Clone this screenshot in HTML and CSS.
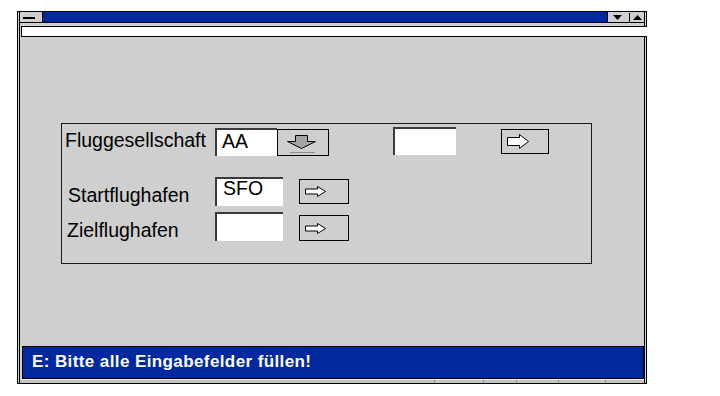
FILE: index.html
```html
<!DOCTYPE html>
<html lang="de">
<head>
    <meta charset="UTF-8">
    <meta name="viewport" content="width=device-width, initial-scale=1.0">
    <title>Flugauswahl</title>
    <link rel="stylesheet" href="styles.css">
</head>
<body>
    <div class="window">
        <div class="frame">
            <div class="titlebar">
                <div class="sysmenu"><span class="dash"></span></div>
                <div class="caption"></div>
                <svg class="winbtns" width="36" height="10" viewBox="0 0 36 10">
                    <polygon points="5,3 14,3 9.5,8" fill="#000"/>
                    <line x1="21.5" y1="1" x2="21.5" y2="10" stroke="#000"/>
                    <polygon points="25,8 34,8 29.5,3" fill="#000"/>
                </svg>
            </div>
            <div class="menubar"></div>

            <div class="client">
                <div class="group">
                    <div class="row row-airline">
                        <span class="label">Fluggesellschaft</span>
                        <div class="field field-airline">AA</div>
                        <div class="btn btn-down">
                            <svg width="30" height="19" viewBox="0 0 30 19">
                                <polygon points="8.5,0.5 20.5,0.5 20.5,6.5 28.5,6.5 14.5,13.5 0.5,6.5 8.5,6.5" fill="#a4a4a4" stroke="#000"/>
                                <line x1="3" y1="17.5" x2="28" y2="17.5" stroke="#8c8c8c"/>
                            </svg>
                        </div>
                        <div class="field field-number"></div>
                        <div class="btn btn-go">
                            <svg width="22" height="16" viewBox="0 0 22 16">
                                <polygon points="0.5,3.5 12.5,3.5 12.5,0.5 21.5,7.5 12.5,14.5 12.5,11.5 0.5,11.5" fill="#fff" stroke="#000"/>
                            </svg>
                        </div>
                    </div>

                    <div class="row row-start">
                        <span class="label">Startflughafen</span>
                        <div class="field field-airport">SFO</div>
                        <div class="btn btn-pick">
                            <svg width="22" height="11" viewBox="0 0 22 11">
                                <polygon points="0.5,3 12.5,3 12.5,0.5 20.5,5.5 12.5,10.5 12.5,8 0.5,8" fill="#fff" stroke="#000"/>
                            </svg>
                        </div>
                    </div>

                    <div class="row row-dest">
                        <span class="label">Zielflughafen</span>
                        <div class="field field-airport"></div>
                        <div class="btn btn-pick">
                            <svg width="22" height="11" viewBox="0 0 22 11">
                                <polygon points="0.5,3 12.5,3 12.5,0.5 20.5,5.5 12.5,10.5 12.5,8 0.5,8" fill="#fff" stroke="#000"/>
                            </svg>
                        </div>
                    </div>
                </div>
            </div>

            <div class="status">E: Bitte alle Eingabefelder füllen!</div>
            <div class="strip">
                <span class="seg seg-main"></span>
                <span class="seg" style="width: 49px"></span>
                <span class="seg" style="width: 33px"></span>
                <span class="seg" style="width: 42px"></span>
                <span class="seg" style="width: 47px"></span>
                <span class="seg" style="width: 39px"></span>
            </div>
        </div>
    </div>
</body>
</html>
```

FILE: styles.css
```css
body {
    margin: 0;
    background: #fff;
    font-family: "Liberation Sans", Arial, sans-serif;
}
.window {
    margin: 11px 0 0 17px;
    width: 630px;
    border: 1px solid #000;
    background: #cfcfcf;
    box-sizing: border-box;
}
.frame {
    margin: 0 1px;
    border-left: 1px solid #000;
    border-right: 1px solid #000;
}

/* title bar */
.titlebar {
    display: flex;
    height: 11px;
    border-bottom: 1px solid #000;
    box-sizing: border-box;
}
.sysmenu {
    width: 22px;
    padding: 5px 0 0 3px;
    box-sizing: border-box;
}
.dash {
    display: block;
    width: 12px;
    height: 2px;
    background: #000;
}
.caption {
    flex: 1;
    background: #0029a0;
    border-left: 1px solid #000;
    border-right: 1px solid #000;
}
.winbtns {
    display: block;
    flex: none;
}
.menubar {
    margin: 3px -3px 0 1px;
    height: 11px;
    background: #fff;
    border: 1px solid #000;
    border-right: none;
    box-sizing: border-box;
}

/* client area */
.client {
    height: 309px;
    overflow: hidden;
}
.group {
    margin: 86px 0 0 41px;
    width: 531px;
    height: 141px;
    border: 1px solid #1a1a1a;
    box-sizing: border-box;
}
.row {
    display: flex;
    align-items: flex-start;
}
.row-airline { margin-top: 3px; }
.row-start { margin-top: 21px; }
.row-dest { margin-top: 6px; }

.label {
    width: 153px;
    font-size: 19.5px;
    line-height: 22px;
    color: #000;
    box-sizing: border-box;
    white-space: nowrap;
}
.row-airline .label { margin-top: 2px; padding-left: 3px; }
.row-start .label { margin-top: 7px; padding-left: 6px; }
.row-dest .label { margin-top: 7px; padding-left: 5px; }

.field {
    background: #fff;
    border-top: 2px solid #3a3a3a;
    border-left: 2px solid #3a3a3a;
    box-sizing: border-box;
    font-size: 19.5px;
    padding-left: 5px;
    color: #000;
}
.field-airline {
    width: 62px;
    height: 28px;
    margin-top: 1px;
    line-height: 22px;
}
.field-number {
    width: 63px;
    height: 28px;
    margin-left: 64px;
}
.field-airport {
    width: 68px;
    height: 29px;
    line-height: 19px;
    padding-left: 6px;
}

.btn {
    display: flex;
    align-items: center;
    border: 1px solid #000;
    box-sizing: border-box;
    padding-left: 5px;
}
.btn svg { display: block; }
.btn-down {
    width: 52px;
    height: 27px;
    margin-top: 2px;
    padding: 3px 0 0 9px;
}
.btn-go {
    width: 48px;
    height: 25px;
    margin: 2px 0 0 45px;
}
.btn-pick {
    width: 50px;
    height: 25px;
    margin: 2px 0 0 16px;
}
.row-dest .btn-pick {
    height: 26px;
    margin-top: 3px;
}

/* status line */
.status {
    margin-left: 2px;
    height: 33px;
    border: 1px solid #000;
    box-sizing: border-box;
    background: #0029a0;
    color: #fff;
    font-size: 17px;
    font-weight: bold;
    letter-spacing: 0.4px;
    line-height: 20px;
    padding: 5px 0 0 9px;
}
.strip {
    display: flex;
    height: 4px;
    background: #c4c4c4;
    border-top: 1px solid #ececec;
    box-sizing: border-box;
}
.seg {
    border-left: 1px solid #8a8a8a;
    box-sizing: border-box;
}
.seg-main {
    flex: 1;
    border-left: none;
}
```
